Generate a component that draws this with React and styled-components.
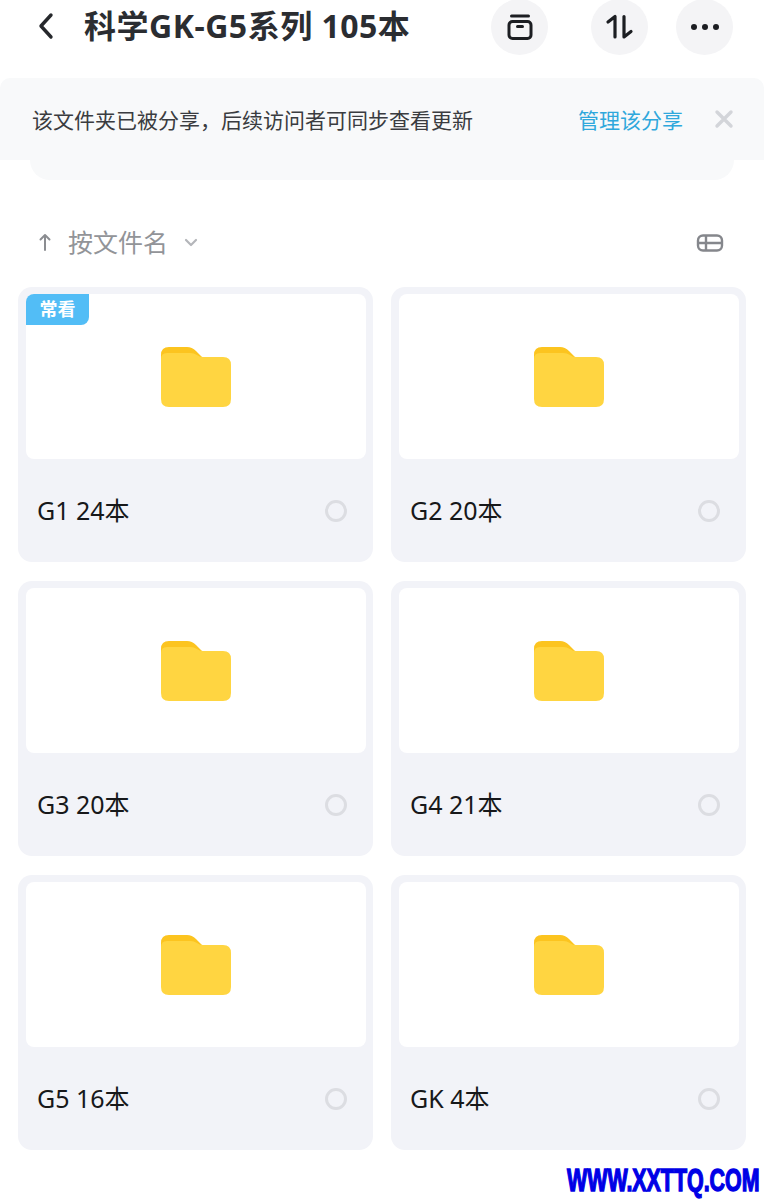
import React from "react"
import styled, { createGlobalStyle } from "styled-components"

const folders = [
  { name: "G1 24本", pinned: true },
  { name: "G2 20本" },
  { name: "G3 20本" },
  { name: "G4 21本" },
  { name: "G5 16本" },
  { name: "GK 4本" }
]

const App = () => (
  <Page>
    <GlobalStyle />
    <Header>
      <BackButton>
        <svg width="20" height="28" viewBox="0 0 20 28" fill="none">
          <path d="M15 3 L5 14 L15 25" stroke="#26282c" strokeWidth="3.4" strokeLinecap="round" strokeLinejoin="round" />
        </svg>
      </BackButton>
      <Title>科学GK-G5系列 105本</Title>
      <Actions>
        <RoundButton $right={43}>
          <svg width="28" height="28" viewBox="0 0 28 28" fill="none" stroke="#1c1e22" strokeWidth="3" strokeLinecap="round" strokeLinejoin="round">
            <path d="M5.5 3 H22.5" />
            <rect x="3" y="8.5" width="22" height="17" rx="3.5" />
            <path d="M11.5 13.5 H16.5" />
          </svg>
        </RoundButton>
        <RoundButton $right={28}>
          <svg width="30" height="28" viewBox="0 0 30 28" fill="none" stroke="#1c1e22" strokeWidth="3.2" strokeLinecap="round" strokeLinejoin="round">
            <path d="M3 9 L10 3.5 V24" />
            <path d="M19 3.5 V24 L26 18.5" />
          </svg>
        </RoundButton>
        <RoundButton>
          <svg width="30" height="8" viewBox="0 0 30 8" fill="#1c1e22">
            <circle cx="4" cy="4" r="3" />
            <circle cx="15" cy="4" r="3" />
            <circle cx="26" cy="4" r="3" />
          </svg>
        </RoundButton>
      </Actions>
    </Header>

    <Banner>
      <BannerText>该文件夹已被分享，后续访问者可同步查看更新</BannerText>
      <BannerLink>管理该分享</BannerLink>
      <CloseIcon width="20" height="20" viewBox="0 0 20 20" fill="none" stroke="#d3d5d9" strokeWidth="3.4" strokeLinecap="round">
        <path d="M3 3 L17 17 M17 3 L3 17" />
      </CloseIcon>
    </Banner>
    <BannerTail />

    <SortBar>
      <SortArrow width="14" height="20" viewBox="0 0 14 20" fill="none" stroke="#8b8d91" strokeWidth="2" strokeLinecap="round" strokeLinejoin="round">
        <path d="M7 18 V3 M2.5 7.5 L7 3 L11.5 7.5" />
      </SortArrow>
      <SortLabel>按文件名</SortLabel>
      <SortCaret width="14" height="9" viewBox="0 0 14 9" fill="none" stroke="#b4b6ba" strokeWidth="2.2" strokeLinecap="round" strokeLinejoin="round">
        <path d="M2 2 L7 7 L12 2" />
      </SortCaret>
      <ViewToggle width="28" height="20" viewBox="0 0 28 20" fill="none" stroke="#85878c" strokeWidth="2.4" strokeLinejoin="round">
        <rect x="2" y="2.5" width="24" height="15" rx="5" />
        <path d="M2 10 H26 M10 2.5 V17.5" />
      </ViewToggle>
    </SortBar>

    <Grid>
      {folders.map(folder => {
        return (
          <Card key={folder.name}>
            <Thumb>
              {folder.pinned && <Tag>常看</Tag>}
              <svg width="70" height="60" viewBox="0 0 70 60">
                <path d="M0 8 Q0 0 8 0 H26 Q31 0 35 4 L42 11 H30 L0 30 Z" fill="#fcc41f" />
                <path d="M0 12 Q0 6 6 6 H29 Q33 6 36 8 Q38 10 42 10 H62 Q70 10 70 18 V52 Q70 60 62 60 H8 Q0 60 0 52 Z" fill="#ffd541" />
              </svg>
            </Thumb>
            <CardFooter>
              <CardName>{folder.name}</CardName>
              <Radio />
            </CardFooter>
          </Card>
        )
      })}
    </Grid>
    <Watermark>WWW.XXTTQ.COM</Watermark>
  </Page>
)

/**********BEGIN STYLING**********/
const GlobalStyle = createGlobalStyle`
  html, body {
    margin: 0;
    background: #fff;
  }
  body {
    font-family: "Noto Sans", "Noto Sans CJK SC", sans-serif;
  }
`
const Page = styled.div`
  position: relative;
  width: 764px;
  height: 1200px;
  overflow: hidden;
  background: #fff;
`
const Header = styled.div`
  display: flex;
  align-items: center;
  height: 78px;
  padding: 0 31px 25px 36px;
  box-sizing: border-box;
`
const BackButton = styled.div`
  display: flex;
  width: 48px;
  margin-top: -1px;
`
const Title = styled.h1`
  margin: -5px 0 0;
  font-size: 32px;
  font-weight: 700;
  letter-spacing: 0.5px;
  color: #2b2d31;
  font-family: "Noto Sans", "Noto Sans CJK SC", sans-serif;
  white-space: nowrap;
`
const Actions = styled.div`
  display: flex;
  margin-left: auto;
`
const RoundButton = styled.div`
  display: flex;
  align-items: center;
  justify-content: center;
  flex: none;
  width: 57px;
  height: 56px;
  margin-right: ${p => p.$right || 0}px;
  border-radius: 50%;
  background: #f4f4f6;
`
const Banner = styled.div`
  display: flex;
  align-items: center;
  height: 82px;
  padding: 0 30px 0 32px;
  box-sizing: border-box;
  background: #f8f9fa;
  border-radius: 10px 10px 0 0;
`
const BannerText = styled.span`
  font-size: 21px;
  color: #3a3c40;
`
const BannerLink = styled.span`
  margin-left: auto;
  font-size: 21px;
  color: #2fa8dc;
`
const CloseIcon = styled.svg`
  margin-left: 31px;
`
const BannerTail = styled.div`
  height: 20px;
  margin: 0 30px;
  background: #f8f9fa;
  border-radius: 0 0 24px 24px;
`
const SortBar = styled.div`
  display: flex;
  align-items: center;
  height: 44px;
  margin: 40px 0 23px;
  padding: 0 40px 0 38px;
`
const SortArrow = styled.svg`
  margin-right: 16px;
`
const SortLabel = styled.span`
  margin-top: -2px;
  font-size: 25px;
  color: #929498;
`
const SortCaret = styled.svg`
  margin-left: 16px;
`
const ViewToggle = styled.svg`
  margin-left: auto;
  margin-top: 2px;
`
const Grid = styled.div`
  display: grid;
  grid-template-columns: 355px 355px;
  grid-auto-rows: 275px;
  column-gap: 18px;
  row-gap: 19px;
  padding: 0 18px;
`
const Card = styled.div`
  display: flex;
  flex-direction: column;
  padding: 7px 7px 0 8px;
  border-radius: 14px;
  background: #f2f3f8;
`
const Thumb = styled.div`
  position: relative;
  display: flex;
  flex: none;
  align-items: center;
  justify-content: center;
  height: 165px;
  border-radius: 8px;
  background: #fff;
`
const Tag = styled.div`
  position: absolute;
  top: 0;
  left: 0;
  width: 63px;
  height: 31px;
  line-height: 31px;
  text-align: center;
  font-size: 18px;
  font-weight: 700;
  color: #fff;
  background: #52bdf6;
  border-radius: 8px 0 8px 0;
`
const CardFooter = styled.div`
  display: flex;
  align-items: center;
  justify-content: space-between;
  flex: 1;
  padding: 0 19px 0 11px;
`
const CardName = styled.span`
  margin-top: -4px;
  font-size: 25px;
  color: #17181a;
`
const Radio = styled.div`
  width: 16px;
  height: 16px;
  border: 3px solid #dcdde2;
  border-radius: 50%;
`
const Watermark = styled.div`
  position: absolute;
  top: 1163px;
  left: 567px;
  font-family: "Liberation Sans", sans-serif;
  font-size: 31px;
  font-weight: 700;
  color: #0000e6;
  -webkit-text-stroke: 1.4px #0000e6;
  white-space: nowrap;
  transform: scaleX(0.69);
  transform-origin: left center;
`
/**********END STYLING**********/

export default App
